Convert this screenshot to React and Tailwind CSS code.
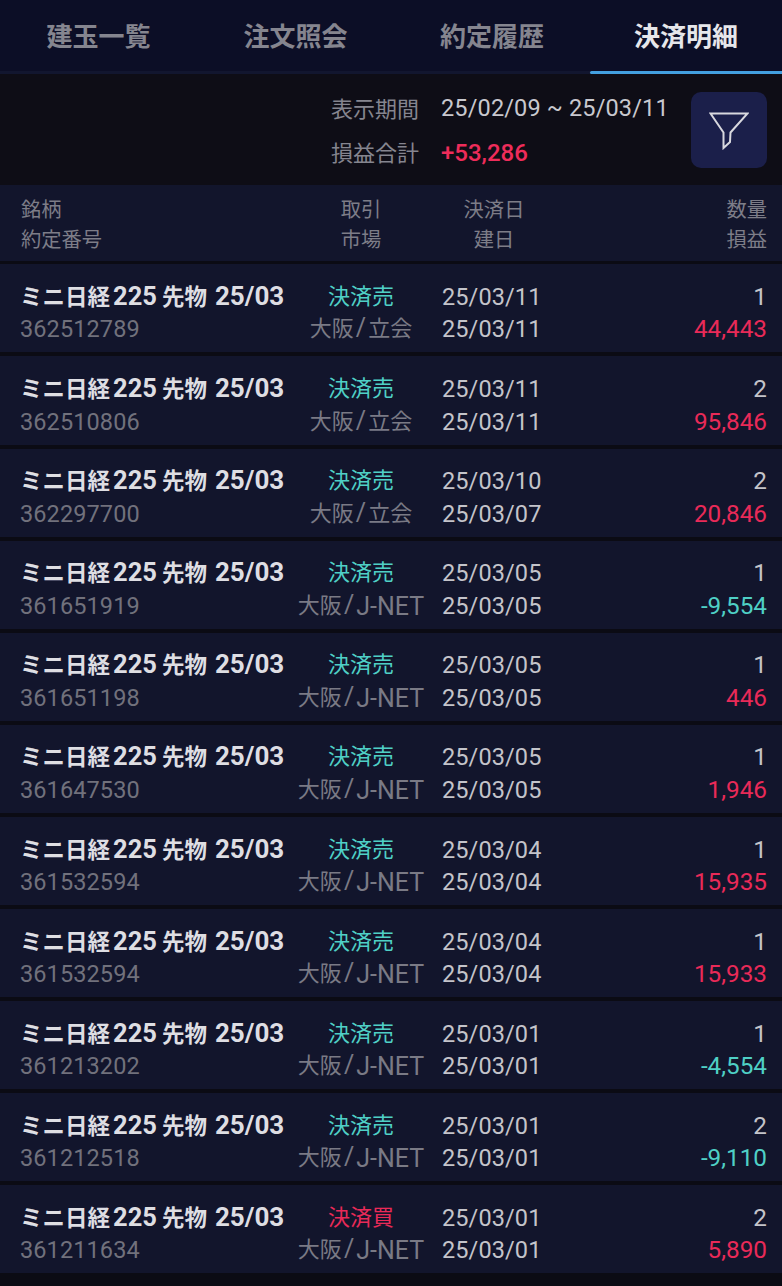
import React from "react";

const rows = [
  ["362512789", "決済売", "立会", "25/03/11", "25/03/11", "1", "44,443"],
  ["362510806", "決済売", "立会", "25/03/11", "25/03/11", "2", "95,846"],
  ["362297700", "決済売", "立会", "25/03/10", "25/03/07", "2", "20,846"],
  ["361651919", "決済売", "J-NET", "25/03/05", "25/03/05", "1", "-9,554"],
  ["361651198", "決済売", "J-NET", "25/03/05", "25/03/05", "1", "446"],
  ["361647530", "決済売", "J-NET", "25/03/05", "25/03/05", "1", "1,946"],
  ["361532594", "決済売", "J-NET", "25/03/04", "25/03/04", "1", "15,935"],
  ["361532594", "決済売", "J-NET", "25/03/04", "25/03/04", "1", "15,933"],
  ["361213202", "決済売", "J-NET", "25/03/01", "25/03/01", "1", "-4,554"],
  ["361212518", "決済売", "J-NET", "25/03/01", "25/03/01", "2", "-9,110"],
  ["361211634", "決済買", "J-NET", "25/03/01", "25/03/01", "2", "5,890"],
];

const tabs = [
  ["建玉一覧", "w-[197px]"],
  ["注文照会", "w-[197px]"],
  ["約定履歴", "w-[196px]"],
  ["決済明細", "w-[192px]"],
];

export default function App() {
  return (
    <div className="w-[782px] h-[1286px] overflow-hidden bg-[#0b0b14] font-['Roboto','Noto_Sans_CJK_JP',sans-serif] text-[22px]">
      {/* Tabs */}
      <div className="flex h-[74px] bg-[#0c0e26] border-b-[3px] border-[#12162f]">
        {tabs.map(([t, w], i) => (
          <div
            key={t}
            className={`relative ${w} flex items-center justify-center pt-[4px] text-[26px] font-bold ${i === 3 ? "text-[#e6e6ea]" : "text-[#85858f]"}`}
          >
            {t}
            {i === 3 && <div className="absolute left-0 right-0 -bottom-[3px] h-[3px] rounded-l-full bg-[#43a0e0]" />}
          </div>
        ))}
      </div>

      {/* Period summary */}
      <div className="flex justify-end h-[111px] bg-[#0e0d16] pt-[18px] pr-[15px]">
        <div className="flex flex-col gap-[10px]">
          <div className="flex h-[34px] items-center">
            <span className="w-[110px] text-[#85858f] text-[22px]">表示期間</span>
            <span className="w-[250px] text-[#c8c8ce] text-[23.5px] tracking-[0.15px]">25/02/09 ~ 25/03/11</span>
          </div>
          <div className="flex h-[34px] items-center">
            <span className="w-[110px] text-[#85858f] text-[22px]">損益合計</span>
            <span className="w-[250px] text-[#ee2c5a] text-[24px] font-medium">+53,286</span>
          </div>
        </div>
        <div className="flex w-[76px] h-[76px] items-center justify-center rounded-[10px] bg-[#1b1f4a]">
          <svg width="40" height="40" viewBox="0 0 40 40" fill="none" stroke="#d8d8de" strokeWidth="2">
            <path d="M1.5 3.5H38.5L21.5 22.5L21 32L14.5 38V22.5L1.5 3.5Z" />
          </svg>
        </div>
      </div>

      {/* Column header */}
      <div className="flex h-[76px] items-center bg-[#12152c] pl-[21px] pr-[15px] pt-[4px] text-[20.3px] leading-[30px] text-[#7d7d88]">
        <div className="w-[289px]">
          <div>銘柄</div>
          <div>約定番号</div>
        </div>
        <div className="w-[102px] text-center">
          <div>取引</div>
          <div>市場</div>
        </div>
        <div className="w-[164px] text-center">
          <div>決済日</div>
          <div>建日</div>
        </div>
        <div className="flex-1 text-right">
          <div>数量</div>
          <div>損益</div>
        </div>
      </div>

      {/* Rows */}
      <div className="flex flex-col gap-[4px] pt-[3.4px]">
        {rows.map((r, i) => (
          <div key={i} className="flex h-[88.1px] items-center bg-[#12152c] pl-[20px] pr-[15px] pt-[10px] leading-[32.5px]">
            <div className="w-[271px] shrink-0">
              <div className="font-bold text-[#dedee3] text-[22.5px] whitespace-nowrap">
                ミニ日経
                <span className="ml-[3px] mr-[5px] text-[25.5px] leading-none">225</span>
                先物
                <span className="ml-[8px] text-[26px] leading-none">25/03</span>
              </div>
              <div className="text-[#71717c] text-[23.5px] tracking-[0.1px]">{r[0]}</div>
            </div>
            <div className="w-[140px] shrink-0 text-center">
              <div className={r[1] === "決済買" ? "text-[#e92a58]" : "text-[#4fd0c6]"}>{r[1]}</div>
              <div className="text-[#7a7a85] whitespace-nowrap">
                大阪<span className="mx-[2px] text-[25px] leading-none">/</span>
                {r[2] === "立会" ? r[2] : <span className="text-[25px] leading-none align-[-2px]">{r[2]}</span>}
              </div>
            </div>
            <div className="w-[110px] shrink-0 pl-[11px] text-[#c4c4ca] text-[23.5px] tracking-[0.1px]">
              <div>{r[3]}</div>
              <div>{r[4]}</div>
            </div>
            <div className="flex-1 text-right text-[24.3px]">
              <div className="text-[#c4c4ca]">{r[5]}</div>
              <div className={r[6].startsWith("-") ? "text-[#4fd0c6]" : "text-[#e92a58]"}>{r[6]}</div>
            </div>
          </div>
        ))}
      </div>
    </div>
  );
}
